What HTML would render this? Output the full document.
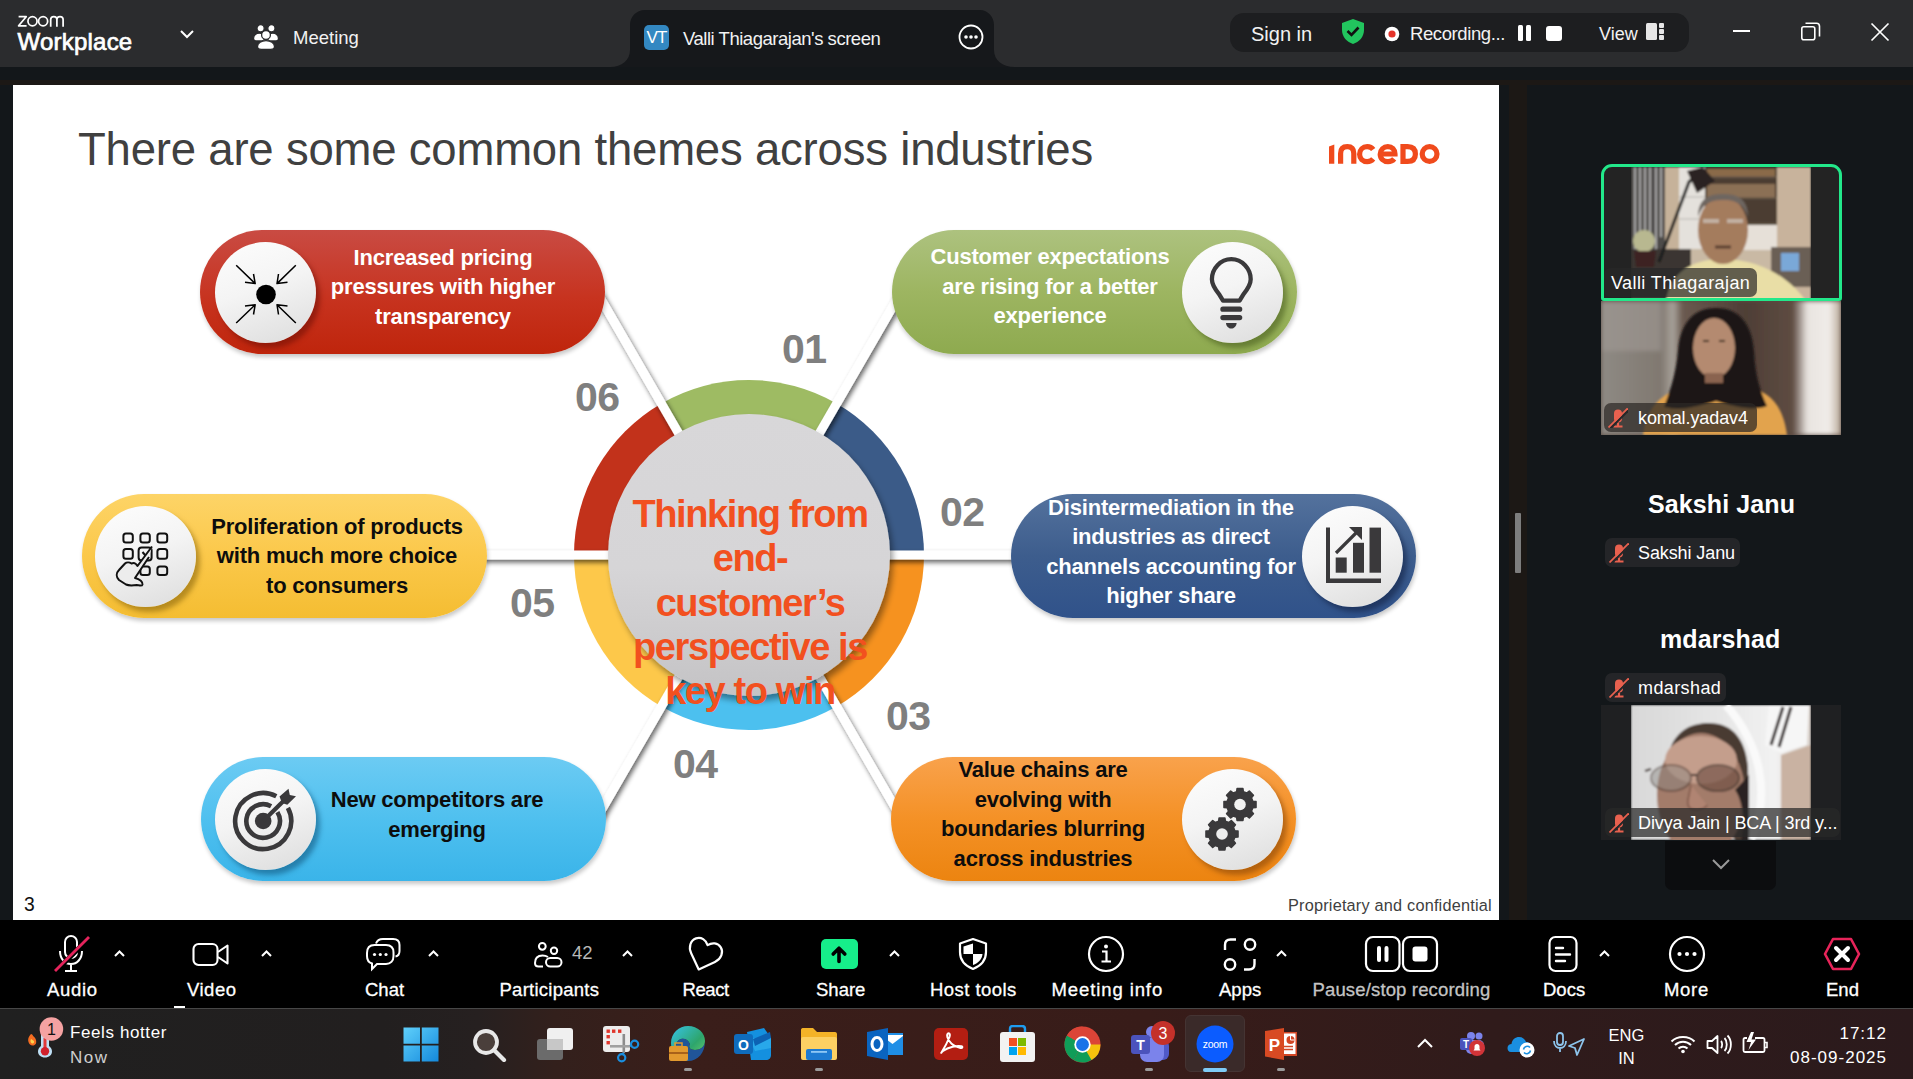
<!DOCTYPE html>
<html><head><meta charset="utf-8">
<style>
*{margin:0;padding:0;box-sizing:border-box}
html,body{width:1913px;height:1079px;overflow:hidden;background:#15181b;font-family:"Liberation Sans",sans-serif}
.a{position:absolute}
#top{left:0;top:0;width:1913px;height:67px;background:#2b2c2e}
#dark{left:0;top:67px;width:1913px;height:853px;background:#13171a}
#slide{left:13px;top:85px;width:1486px;height:835px;background:#fff;overflow:hidden}
#rp{left:1499px;top:67px;width:414px;height:853px;background:#13171a}
#tb{left:0;top:920px;width:1913px;height:88px;background:#000}
#task{left:0;top:1008px;width:1913px;height:71px;background:linear-gradient(90deg,#202020 0%,#221f1f 20%,#262020 25%,#33201c 29%,#3a1e1a 36%,#381c19 60%,#301b1b 78%,#2b1a1c 100%);border-top:1px solid #474747}
.w{color:#fff}
.lb{top:979px;font-size:18.5px;line-height:22px;color:#fff;white-space:nowrap;-webkit-text-stroke:0.3px currentColor}
.car{top:949px;width:13px;height:10px;fill:none;stroke:#fff;stroke-width:2}

.lbl{position:absolute;height:29px;border-radius:7px;background:rgba(38,39,41,.92)}
.lbl span{position:absolute;top:4px;color:#fff;font-size:18px;line-height:22px;white-space:nowrap;letter-spacing:-0.1px}
.mic{position:absolute;left:4px;top:5px;width:20px;height:20px}

.pill{position:absolute;width:405px;height:124px;border-radius:62px;box-shadow:1px 3px 4px rgba(0,0,0,.22)}
.circ{position:absolute;top:12px;width:101px;height:101px;border-radius:50%;background:linear-gradient(160deg,#fdfdfd 0%,#f4f4f4 45%,#dcdcdc 100%)}
.circ svg{position:absolute;left:0;top:0}
.ptxt{position:absolute;width:300px;text-align:center;font-weight:bold;font-size:22px;line-height:29.5px;letter-spacing:-0.2px;white-space:nowrap}
.k{color:#0d0d0d}
.num{font-weight:bold;font-size:41px;line-height:44px;color:#7f7f7f;letter-spacing:-0.6px}
.ctext{left:600px;top:492px;width:300px;text-align:center;color:#f2501f;font-weight:bold;font-size:38px;line-height:44.3px;letter-spacing:-1.4px;white-space:nowrap}
#title{left:78px;top:125px;font-size:45.5px;line-height:50px;color:#404040;letter-spacing:-0.2px;white-space:nowrap}

</style></head><body>
<div id="top" class="a"></div>
<svg class="a" style="left:0;top:0" width="70" height="30" viewBox="0 0 70 30" fill="none" stroke="#fff" stroke-width="1.75"><path d="M18.6 16.7H26.2L18.6 25.8H26.6" stroke-linejoin="round"/><circle cx="32.5" cy="21.25" r="4.55"/><circle cx="43.1" cy="21.25" r="4.55"/><path d="M50.7 26.8V19.6C50.7 17.4 52.1 16.5 53.8 16.5C55.6 16.5 56.9 17.4 56.9 19.6V26.8M56.9 19.6C56.9 17.4 58.3 16.5 60 16.5C61.8 16.5 63.1 17.4 63.1 19.6V26.8"/></svg>
<div class="a w" style="left:17.5px;top:27.8px;font-size:24px;font-weight:normal;-webkit-text-stroke:0.7px #fff;letter-spacing:0.22px;line-height:28px">Workplace</div>
<svg class="a" style="left:178px;top:28px" width="18" height="14" viewBox="0 0 18 14"><path d="M3 3L9 9L15 3" stroke="#fff" stroke-width="2" fill="none"/></svg>
<svg class="a" style="left:252px;top:23px" width="28" height="28" viewBox="0 0 28 28" fill="#fff" stroke="#2b2c2e" stroke-width="1.3"><circle cx="8.6" cy="5.3" r="3.6"/><circle cx="19.4" cy="5.3" r="3.6"/><path d="M1.5 15.5C1.5 12 4.5 10.2 7.2 10.2C9.8 10.2 12.3 12 12.3 15.5C12.3 17 11.3 18 9.7 18H4.2C2.6 18 1.5 17 1.5 15.5Z"/><path d="M15.7 15.5C15.7 12 18.2 10.2 20.8 10.2C23.5 10.2 26.5 12 26.5 15.5C26.5 17 25.4 18 23.8 18H18.3C16.7 18 15.7 17 15.7 15.5Z"/><circle cx="14" cy="11.9" r="4.4"/><path d="M5.5 23.5C5.5 20 9.5 17.6 14 17.6C18.5 17.6 22.5 20 22.5 23.5C22.5 25.5 21 26.4 18.8 26.4H9.2C7 26.4 5.5 25.5 5.5 23.5Z"/></svg>
<div class="a w" style="left:293px;top:27px;font-size:18.5px;line-height:22px;color:#f2f2f2">Meeting</div>
<svg class="a" style="left:610px;top:10px" width="405" height="57" viewBox="0 0 405 57"><path d="M0 57C12 57 20 50 20 40V15C20 7 26 0 35 0H370C378 0 384 7 384 15V40C384 50 392 57 405 57Z" fill="#16181b"/></svg>
<div class="a" style="left:644px;top:25px;width:25px;height:25px;border-radius:5px;background:#3388c2;color:#fff;font-size:17px;line-height:25px;text-align:center;letter-spacing:-0.8px">VT</div>
<div class="a w" style="left:683px;top:28px;font-size:18.5px;line-height:22px;letter-spacing:-0.47px;color:#f2f2f2">Valli Thiagarajan's screen</div>
<svg class="a" style="left:957px;top:23px" width="28" height="28" viewBox="0 0 28 28"><circle cx="14" cy="14" r="11.5" stroke="#fff" stroke-width="1.8" fill="none"/><circle cx="9" cy="14" r="1.8" fill="#fff"/><circle cx="14" cy="14" r="1.8" fill="#fff"/><circle cx="19" cy="14" r="1.8" fill="#fff"/></svg>
<div class="a" style="left:1230px;top:13px;width:459px;height:39px;border-radius:14px;background:#1d1e20"></div>
<div class="a w" style="left:1251px;top:22px;font-size:20px;line-height:24px;color:#f2f2f2">Sign in</div>
<svg class="a" style="left:1340px;top:18px" width="26" height="27" viewBox="0 0 26 27"><path d="M13 1L24 5V12C24 19 19 24 13 26C7 24 2 19 2 12V5Z" fill="#22c55e"/><path d="M7.5 13L11.5 17L18.5 9.5" stroke="#111" stroke-width="2.6" fill="none"/></svg>
<svg class="a" style="left:1384px;top:26px" width="16" height="16" viewBox="0 0 16 16"><circle cx="8" cy="8" r="7.3" fill="#fff"/><circle cx="8" cy="8" r="3.6" fill="#e5332a"/></svg>
<div class="a w" style="left:1410px;top:23px;font-size:18.5px;line-height:22px;letter-spacing:-0.4px;color:#f2f2f2">Recording...</div>
<div class="a" style="left:1518px;top:25px;width:5px;height:16px;background:#fff;border-radius:1.5px"></div>
<div class="a" style="left:1526px;top:25px;width:5px;height:16px;background:#fff;border-radius:1.5px"></div>
<div class="a" style="left:1546px;top:26px;width:16px;height:15px;background:#fff;border-radius:3px"></div>
<div class="a w" style="left:1599px;top:22.5px;font-size:18px;line-height:22px;color:#f2f2f2">View</div>
<svg class="a" style="left:1646px;top:23px" width="18" height="17" viewBox="0 0 18 17" fill="#e6e6e6"><rect x="0" y="0" width="11" height="17" rx="1.5"/><rect x="13" y="0" width="5" height="5" rx="1"/><rect x="13" y="6" width="5" height="5" rx="1"/><rect x="13" y="12" width="5" height="5" rx="1"/></svg>
<div class="a" style="left:1733px;top:30px;width:17px;height:1.6px;background:#fff"></div>
<svg class="a" style="left:1800px;top:21px" width="22" height="21" viewBox="0 0 22 21" fill="none" stroke="#fff" stroke-width="1.6"><rect x="1.8" y="5.8" width="13" height="13" rx="2"/><path d="M5.5 2.2H16.5C18.5 2.2 19.5 3.2 19.5 5.2V15.5"/></svg>
<svg class="a" style="left:1870px;top:22px" width="20" height="20" viewBox="0 0 20 20" stroke="#fff" stroke-width="1.7"><path d="M1.5 1.5L18.5 18.5M18.5 1.5L1.5 18.5"/></svg>

<div id="dark" class="a"></div>
<div id="rp" class="a"></div>
<div class="a" style="left:0;top:80px;width:1913px;height:5px;background:#1c1815"></div><div class="a" style="left:1509px;top:85px;width:18px;height:835px;background:#1c1815"></div>
<div class="a" style="left:1515px;top:513px;width:6px;height:60px;background:#7d7d7d;border-radius:1px"></div>
<!-- video 1 -->
<div class="a" style="left:1601px;top:164px;width:241px;height:137px;border-radius:11px 11px 2px 2px;overflow:hidden;background:#232323">
<svg class="a" style="left:30px;top:3px" width="180" height="134" viewBox="0 0 180 134">
<defs><filter id="bl1"><feGaussianBlur stdDeviation="1.2"/></filter></defs>
<g filter="url(#bl1)">
<rect width="180" height="134" fill="#c9b9a4"/>
<rect x="0" y="0" width="34" height="134" fill="#4e4c4a"/>
<path d="M4 0V90M9 0V95M14 0V80M19 0V92M25 0V85M30 0V70" stroke="#d8d8d8" stroke-width="1.6" opacity=".8"/>
<rect x="34" y="0" width="14" height="90" fill="#c6b29a"/>
<rect x="48" y="0" width="26" height="82" fill="#e4e1dc"/>
<path d="M48 30H74M48 52H74" stroke="#b8b4ae" stroke-width="1"/>
<rect x="74" y="0" width="72" height="58" fill="#4b3c33"/>
<rect x="76" y="2" width="68" height="8" fill="#8a6a48"/>
<rect x="76" y="17" width="68" height="14" fill="#8b6f55"/>
<path d="M74 10H146M74 31H146M74 57H146" stroke="#6a5a4c" stroke-width="1.4"/>
<rect x="74" y="58" width="72" height="25" fill="#e6e0d8"/>
<rect x="146" y="0" width="34" height="134" fill="#c8b39c"/>
<rect x="140" y="80" width="40" height="40" fill="#6a5e54"/>
<rect x="150" y="86" width="18" height="18" fill="#7aa8d8"/>
<rect x="0" y="82" width="60" height="52" fill="#3a3632"/>
<circle cx="13" cy="74" r="11" fill="#b8b890"/>
<path d="M3 84H25L23 100H5Z" fill="#3c2420"/>
<path d="M28 95L58 15L66 8" stroke="#1a1a1a" stroke-width="3" fill="none"/>
<path d="M56 4L72 0L84 14L66 26Z" fill="#2a2420"/>
<path d="M35 134C40 100 70 92 90 92C115 92 150 100 175 134Z" fill="#e9dea6"/>
<ellipse cx="92" cy="63" rx="25" ry="34" fill="#a47b5d"/>
<path d="M67 50C67 30 80 27 92 27C104 27 117 30 117 50C112 36 104 33 92 33C80 33 72 36 67 50Z" fill="#6e6660"/>
<path d="M72 54H88M96 54H112" stroke="#cfc8c0" stroke-width="4" opacity=".7"/>
<path d="M84 80H100" stroke="#5a4030" stroke-width="3"/>
</g>
</svg>
</div>
<div class="a" style="left:1601px;top:164px;width:241px;height:137px;border:3.2px solid #22e88a;border-radius:11px 11px 3px 3px"></div>
<div class="a lbl" style="left:1604px;top:268px;width:153px;background:rgba(40,40,40,.7)"><span style="left:7px;letter-spacing:0.4px">Valli Thiagarajan</span></div>
<!-- video 2 -->
<div class="a" style="left:1601px;top:301px;width:240px;height:134px;overflow:hidden;background:#5a4a42">
<svg class="a" style="left:0;top:0" width="240" height="134" viewBox="0 0 240 134">
<defs><filter id="bl2"><feGaussianBlur stdDeviation="2"/></filter><filter id="bl2b"><feGaussianBlur stdDeviation="0.9"/></filter><linearGradient id="v2bg" x1="0" y1="0" x2="1" y2="0"><stop offset="0" stop-color="#8e8a84"/><stop offset=".25" stop-color="#807870"/><stop offset=".3" stop-color="#a8a29a"/><stop offset=".34" stop-color="#6a5a50"/><stop offset=".6" stop-color="#4e3e36"/><stop offset=".8" stop-color="#5e4c42"/><stop offset=".86" stop-color="#e8e4e0"/><stop offset=".95" stop-color="#f0ece8"/><stop offset="1" stop-color="#b8a898"/></linearGradient></defs>
<g filter="url(#bl2)"><rect width="240" height="134" fill="url(#v2bg)"/><rect x="0" y="0" width="60" height="50" fill="#a09a94" opacity=".6"/></g>
<g filter="url(#bl2b)">
<path d="M42 134C46 104 62 92 82 87L150 87C170 92 182 105 186 134Z" fill="#e2a34e"/>
<path d="M115 7C90 7 79 25 77 50C75 75 67 95 63 106C80 111 100 105 115 100C130 105 150 111 166 105C160 92 154 75 153 50C151 25 140 7 115 7Z" fill="#1e1818"/>
<ellipse cx="113" cy="47" rx="21" ry="30" fill="#b48a70"/>
<path d="M104 72H122V82H104Z" fill="#8a6450"/>
<path d="M102 40H108M118 40H124" stroke="#3a2a22" stroke-width="2"/>
</g>
</svg>
</div>
<div class="a lbl" style="left:1604px;top:403px;width:153px;background:rgba(45,40,38,.72)"><svg class="mic" viewBox="0 0 20 20"><rect x="6" y="1.5" width="8" height="13" rx="4" fill="#e8614f"/><path d="M10 14.5V17.5M5.5 18.5H14.5" stroke="#e8614f" stroke-width="2.2"/><path d="M1.8 21L21 1.8" stroke="#262729" stroke-width="2.2"/><path d="M0.5 19.5L19.7 0.3" stroke="#e8614f" stroke-width="1.8"/></svg><span style="left:34px">komal.yadav4</span></div>
<div class="a w" style="left:1648px;top:490px;font-size:25px;font-weight:bold;line-height:28px;letter-spacing:0.1px">Sakshi Janu</div>
<div class="a lbl" style="left:1605px;top:538px;width:135px"><svg class="mic" viewBox="0 0 20 20"><rect x="6" y="1.5" width="8" height="13" rx="4" fill="#e8614f"/><path d="M10 14.5V17.5M5.5 18.5H14.5" stroke="#e8614f" stroke-width="2.2"/><path d="M1.8 21L21 1.8" stroke="#262729" stroke-width="2.2"/><path d="M0.5 19.5L19.7 0.3" stroke="#e8614f" stroke-width="1.8"/></svg><span style="left:33px">Sakshi Janu</span></div>
<div class="a w" style="left:1660px;top:624.5px;font-size:25px;font-weight:bold;line-height:28px;letter-spacing:0.1px">mdarshad</div>
<div class="a lbl" style="left:1605px;top:673px;width:121px"><svg class="mic" viewBox="0 0 20 20"><rect x="6" y="1.5" width="8" height="13" rx="4" fill="#e8614f"/><path d="M10 14.5V17.5M5.5 18.5H14.5" stroke="#e8614f" stroke-width="2.2"/><path d="M1.8 21L21 1.8" stroke="#262729" stroke-width="2.2"/><path d="M0.5 19.5L19.7 0.3" stroke="#e8614f" stroke-width="1.8"/></svg><span style="left:33px;letter-spacing:0.4px">mdarshad</span></div>
<!-- video 3 -->
<div class="a" style="left:1601px;top:705px;width:240px;height:135px;overflow:hidden;background:#1f2022">
<svg class="a" style="left:30px;top:0" width="180" height="135" viewBox="0 0 180 135">
<defs><filter id="bl3"><feGaussianBlur stdDeviation="1.2"/></filter><linearGradient id="v3bg" x1="0" y1="0" x2="1" y2="0"><stop offset="0" stop-color="#d8d8d8"/><stop offset=".5" stop-color="#e6e6e6"/><stop offset=".8" stop-color="#f2f2f2"/><stop offset="1" stop-color="#d8cfc8"/></linearGradient></defs>
<g filter="url(#bl3)">
<rect width="180" height="135" fill="url(#v3bg)"/>
<path d="M95 0C130 40 140 90 120 135" stroke="#fafafa" stroke-width="8" fill="none"/>
<path d="M150 50L180 40V135H150Z" fill="#c9b2a2"/>
<path d="M138 0H178L176 40L150 48L134 40Z" fill="#f6f6f6"/>
<path d="M152 2L140 40M160 2L148 42" stroke="#2a2020" stroke-width="3"/>
<path d="M36 60C38 28 58 18 78 18C100 18 114 32 117 62L118 135H104Z" fill="#4a3a32"/>
<ellipse cx="70" cy="90" rx="44" ry="62" fill="#a37c6a"/>
<ellipse cx="70" cy="55" rx="36" ry="24" fill="#c49e8c"/>
<ellipse cx="40" cy="73" rx="20" ry="13" fill="#8a8682" opacity=".45" stroke="#3a2c26" stroke-width="2.2"/>
<ellipse cx="87" cy="73" rx="21" ry="13" fill="#6a4a3e" opacity=".6" stroke="#3a2c26" stroke-width="2.2"/>
<path d="M14 66L20 64M60 70H66" stroke="#3a2c26" stroke-width="2"/>
<path d="M60 80C58 92 54 100 60 104C66 106 74 104 76 100" fill="#b08472" stroke="#7a5446" stroke-width="1.4"/>
<path d="M104 85C112 95 114 120 110 135H118V70Z" fill="#2a2420"/>
</g>
</svg>
</div>
<div class="a lbl" style="left:1605px;top:808px;width:235px;background:rgba(40,40,40,.72)"><svg class="mic" viewBox="0 0 20 20"><rect x="6" y="1.5" width="8" height="13" rx="4" fill="#e8614f"/><path d="M10 14.5V17.5M5.5 18.5H14.5" stroke="#e8614f" stroke-width="2.2"/><path d="M1.8 21L21 1.8" stroke="#262729" stroke-width="2.2"/><path d="M0.5 19.5L19.7 0.3" stroke="#e8614f" stroke-width="1.8"/></svg><span style="left:33px">Divya Jain | BCA | 3rd y...</span></div>
<div class="a" style="left:1665px;top:841px;width:111px;height:49px;background:#0c0d0f;border-radius:0 0 7px 7px"></div>
<svg class="a" style="left:1710px;top:857px" width="22" height="14" viewBox="0 0 22 14"><path d="M3 3L11 11L19 3" stroke="#9a9a9a" stroke-width="2" fill="none"/></svg>

<div id="slide" class="a"></div>
<svg class="a" style="left:1329px;top:144px" width="112" height="21" viewBox="0 0 112 21" fill="none" stroke="#f04a1c" stroke-width="5.2"><path d="M0 2.4L5.3 0.6V19.8H0Z" fill="#f04a1c" stroke="none"/><path d="M11.6 19.8V9.5C11.6 4.8 14 2.6 18.3 2.6C22.6 2.6 24.8 4.8 24.8 9.5V19.8"/><path d="M44.2 5.6C42.8 3.6 40.8 2.6 38.2 2.6C33.8 2.6 30.6 5.8 30.6 10.2C30.6 14.6 33.8 17.6 38.2 17.6C40.8 17.6 42.8 16.6 44.2 14.8"/><path d="M52.5 10H66C66 5.6 63 2.6 58.8 2.6C54.6 2.6 51.2 5.8 51.2 10.2C51.2 14.6 54.6 17.6 59 17.6C61.8 17.6 63.8 16.6 65.2 14.8"/><path d="M74 2.6V17.4H78.6C84 17.4 86.4 14.6 86.4 10C86.4 5.4 84 2.6 78.6 2.6Z"/><circle cx="100.6" cy="10" r="7.4"/></svg>
<div class="a" style="left:24px;top:894.5px;font-size:19.3px;line-height:20px;color:#111">3</div>
<div class="a" style="left:1288px;top:895.5px;font-size:16.3px;line-height:19px;letter-spacing:0.2px;color:#404040">Proprietary and confidential</div>

<div id="title" class="a">There are some common themes across industries</div>
<svg class="a" style="left:0;top:0" width="1913" height="1079" viewBox="0 0 1913 1079">
<defs>
<filter id="lsh" x="-20%" y="-20%" width="140%" height="140%"><feGaussianBlur in="SourceAlpha" stdDeviation="2.4"/><feOffset dx="1.5" dy="3"/><feComponentTransfer><feFuncA type="linear" slope="0.6"/></feComponentTransfer><feMerge><feMergeNode/><feMergeNode in="SourceGraphic"/></feMerge></filter>
<filter id="csh" x="-20%" y="-20%" width="140%" height="140%"><feGaussianBlur in="SourceAlpha" stdDeviation="3"/><feOffset dx="3" dy="5"/><feComponentTransfer><feFuncA type="linear" slope="0.4"/></feComponentTransfer><feMerge><feMergeNode/><feMergeNode in="SourceGraphic"/></feMerge></filter>
<linearGradient id="gc" x1="0" y1="0" x2="0" y2="1"><stop offset="0" stop-color="#d8d7d9"/><stop offset="0.55" stop-color="#d6d5d7"/><stop offset="1" stop-color="#c4c3c5"/></linearGradient>
</defs>
<path d="M749,555 L924.0,555.0 A175,175 0 0 0 836.5,403.4 Z" fill="#3b5b88"/>
<path d="M749,555 L836.5,403.4 A175,175 0 0 0 661.5,403.4 Z" fill="#9ebb63"/>
<path d="M749,555 L661.5,403.4 A175,175 0 0 0 574.0,555.0 Z" fill="#c2321b"/>
<path d="M749,555 L574.0,555.0 A175,175 0 0 0 661.5,706.6 Z" fill="#fdc84a"/>
<path d="M749,555 L661.5,706.6 A175,175 0 0 0 836.5,706.6 Z" fill="#4cc0ef"/>
<path d="M749,555 L836.5,706.6 A175,175 0 0 0 924.0,555.0 Z" fill="#f6921f"/>
<g filter="url(#lsh)" stroke="#fff" stroke-width="9">
<line x1="749" y1="555" x2="900" y2="294"/>
<line x1="749" y1="555" x2="1030" y2="555"/>
<line x1="749" y1="555" x2="900" y2="816"/>
<line x1="749" y1="555" x2="598" y2="816"/>
<line x1="749" y1="555" x2="470" y2="555"/>
<line x1="749" y1="555" x2="598" y2="294"/>
</g>
<circle cx="749" cy="555" r="141" fill="url(#gc)" filter="url(#csh)"/>
</svg>
<div class="a num" style="left:782px;top:327px">01</div>
<div class="a num" style="left:940px;top:490px">02</div>
<div class="a num" style="left:886px;top:694px">03</div>
<div class="a num" style="left:673px;top:742px">04</div>
<div class="a num" style="left:510px;top:581px">05</div>
<div class="a num" style="left:575px;top:375px">06</div>
<div class="a ctext">Thinking from<br>end-<br>customer’s<br>perspective is<br>key to win</div>

<div class="a pill" style="left:200px;top:230px;background:linear-gradient(#c94b43,#c7331f 55%,#bf250c)"><div class="circ" style="left:15px;box-shadow:4px 5px 5px rgba(110,15,5,.55)"><svg width="101" height="101" viewBox="0 0 101 101" stroke="#000" stroke-width="1.5" fill="none" stroke-linejoin="round"><circle cx="51" cy="52.5" r="9.8" fill="#000" stroke="none"/><path d="M21.2 23.2L40.2 41.6M38.5 32L40.2 41.6L30 40.3M80.8 23.2L62 41.6M63.5 32L62 41.6L72.5 40.3M21.2 81L40.2 62.7M30 64L40.2 62.7L38.5 72.5M80.8 81L62 62.7M72.5 64L62 62.7L63.5 72.5"/></svg></div>
<div class="ptxt w" style="left:93px;top:12.7px">Increased pricing<br>pressures with higher<br>transparency</div></div>

<div class="a pill" style="left:892px;top:230px;background:linear-gradient(#adc27f,#9db561 50%,#8eaa4f)"><div class="circ" style="left:290px;box-shadow:4px 5px 5px rgba(70,90,30,.55)"><svg width="101" height="101" viewBox="0 0 101 101" fill="none" stroke="#3a393b"><path d="M41 58.6L37.2 52.3C31.5 45.5 29.9 41.5 29.9 37.3C29.9 26.5 38.5 17.1 49.3 17.1C60.1 17.1 68.7 26.5 68.7 37.3C68.7 41.5 67.1 45.5 61.4 52.3L57.6 58.6Z" stroke-width="4.3" stroke-linejoin="round"/><path d="M40.9 67.2H57.7M40.9 75.6H57.7" stroke-width="5.2" stroke-linecap="round"/><path d="M44 81H54.6C54.6 84 52 86.6 49.3 86.6C46.6 86.6 44 84 44 81Z" fill="#3a393b" stroke="none"/></svg></div>
<div class="ptxt w" style="left:8px;top:12.1px">Customer expectations<br>are rising for a better<br>experience</div></div>

<div class="a pill" style="left:82px;top:494px;background:linear-gradient(#fdd467,#fbc84a 50%,#f4bd32)"><div class="circ" style="left:13px;box-shadow:4px 5px 5px rgba(130,95,10,.55)"><svg width="101" height="101" viewBox="0 0 101 101" fill="none" stroke="#111" stroke-width="2"><rect x="28.4" y="27.4" width="9.4" height="9" rx="2.5"/><rect x="45.4" y="27.4" width="9.4" height="9" rx="2.5"/><rect x="62.4" y="27.4" width="9.8" height="9" rx="2.5"/><rect x="28.4" y="43" width="9.4" height="9.8" rx="2.5"/><rect x="43.6" y="41.6" width="13" height="12.8" rx="3"/><rect x="62.4" y="43" width="9.8" height="9.8" rx="2.5"/><rect x="45.4" y="60.4" width="9.4" height="8.6" rx="2.5"/><rect x="62.4" y="60.4" width="9.8" height="8.6" rx="2.5"/><path d="M47.5 46L52.5 52"/><path d="M57 40.5L42.5 60C41 57.5 38.5 56.5 36.5 57.5C34.5 56 31.5 56 30 57.5L24 64C21 67 21 71 24 74L31 78.5C34 80 38 79.5 42 79C45 79.5 47 80.5 47.5 78.5C48 76 45 73 40 72L54 51" fill="#ececec" stroke-linejoin="round"/></svg></div>
<div class="ptxt k" style="left:105px;top:17.8px">Proliferation of products<br>with much more choice<br>to consumers</div></div>

<div class="a pill" style="left:1011px;top:494px;background:linear-gradient(#54729d,#3d5d8d 50%,#30528a)"><div class="circ" style="left:291px;box-shadow:4px 5px 5px rgba(20,35,70,.6)"><svg width="101" height="101" viewBox="0 0 101 101" fill="#3a393b"><path d="M24 21.5H28V72.5H79V77H24Z"/><rect x="33.7" y="51.5" width="11" height="15.2"/><rect x="51" y="36.8" width="11" height="29.9"/><rect x="67.5" y="21.6" width="11.5" height="45.1"/><path d="M34 47L55 26" stroke="#3a393b" stroke-width="3.2"/><path d="M47 21H60V34Z"/></svg></div>
<div class="ptxt w" style="left:10px;top:-1.1px">Disintermediation in the<br>industries as direct<br>channels accounting for<br>higher share</div></div>

<div class="a pill" style="left:201px;top:757px;background:linear-gradient(#6ccbf3,#4fc0ef 50%,#3ab4e9)"><div class="circ" style="left:14px;box-shadow:4px 5px 5px rgba(20,90,130,.6)"><svg width="101" height="101" viewBox="0 0 101 101" fill="none" stroke="#3a393b" stroke-width="4.6"><path d="M61.3 27.3A28 28 0 1 0 72.9 38.9"/><path d="M56.1 37.2A16.8 16.8 0 1 0 62.4 43.1"/><circle cx="48.2" cy="52" r="8.3" fill="#3a393b" stroke="none"/><path d="M48.2 52L69 31.5" stroke-width="4.2"/><path d="M64.5 27.5L73.5 19.8L74.8 26L81 27.3L72.3 35.8L67 34Z" fill="#3a393b" stroke="none"/></svg></div>
<div class="ptxt k" style="left:86px;top:28.1px">New competitors are<br>emerging</div></div>

<div class="a pill" style="left:891px;top:757px;background:linear-gradient(#f9a24c,#f49126 50%,#ec8410)"><div class="circ" style="left:291px;box-shadow:4px 5px 5px rgba(130,65,10,.55)"><svg width="101" height="101" viewBox="0 0 101 101"><g fill="#3a393b" stroke="#3a393b" stroke-width="1.6" stroke-linejoin="round"><path d="M70.8,32.2 L74.0,32.6 L74.0,38.4 L70.8,38.8 L69.4,42.2 L71.4,44.8 L67.3,48.9 L64.7,46.9 L61.3,48.3 L60.9,51.5 L55.1,51.5 L54.7,48.3 L51.3,46.9 L48.7,48.9 L44.6,44.8 L46.6,42.2 L45.2,38.8 L42.0,38.4 L42.0,32.6 L45.2,32.2 L46.6,28.8 L44.6,26.2 L48.7,22.1 L51.3,24.1 L54.7,22.7 L55.1,19.5 L60.9,19.5 L61.3,22.7 L64.7,24.1 L67.3,22.1 L71.4,26.2 L69.4,28.8Z"/><path d="M52.8,61.7 L56.0,62.1 L56.0,67.9 L52.8,68.3 L51.4,71.7 L53.4,74.3 L49.3,78.4 L46.7,76.4 L43.3,77.8 L42.9,81.0 L37.1,81.0 L36.7,77.8 L33.3,76.4 L30.7,78.4 L26.6,74.3 L28.6,71.7 L27.2,68.3 L24.0,67.9 L24.0,62.1 L27.2,61.7 L28.6,58.3 L26.6,55.7 L30.7,51.6 L33.3,53.6 L36.7,52.2 L37.1,49.0 L42.9,49.0 L43.3,52.2 L46.7,53.6 L49.3,51.6 L53.4,55.7 L51.4,58.3Z"/></g><circle cx="58" cy="35.5" r="5.8" fill="#f2f2f2"/><circle cx="40" cy="65" r="5.8" fill="#ededed"/></svg></div>
<div class="ptxt k" style="left:2px;top:-1.9px">Value chains are<br>evolving with<br>boundaries blurring<br>across industries</div></div>

<div id="tb" class="a"></div>
<svg class="a" style="left:50px;top:934px" width="44" height="40" viewBox="0 0 44 40" fill="none" stroke="#fff" stroke-width="2"><rect x="15" y="2" width="12" height="22" rx="6"/><path d="M10 17C10 25 15 30 21 30C27 30 32 25 32 17M21 30V36M15 37H27"/><path d="M6 37L39 4" stroke="#000" stroke-width="5"/><path d="M5 37L39 3" stroke="#e5245c" stroke-width="2.8"/></svg>
<div class="a lb" style="left:47px;letter-spacing:0.7px">Audio</div>
<svg class="a car" style="left:113px"><path d="M2 7L6.5 2.5L11 7"/></svg>
<svg class="a" style="left:192px;top:942px" width="38" height="26" viewBox="0 0 38 26" fill="none" stroke="#fff" stroke-width="2.1" stroke-linejoin="round"><rect x="1.5" y="2" width="24" height="21" rx="5"/><path d="M26 10L35.5 3.5V21.5L26 15"/></svg>
<div class="a lb" style="left:187px;letter-spacing:0.5px">Video</div>
<div class="a" style="left:174px;top:1006px;width:11px;height:2px;background:#fff"></div>
<svg class="a car" style="left:260px"><path d="M2 7L6.5 2.5L11 7"/></svg>
<svg class="a" style="left:364px;top:936px" width="38" height="36" viewBox="0 0 38 36" fill="none" stroke="#fff" stroke-width="2"><path d="M12 7.5C13 4.5 15 3 19 3H29C33 3 35.5 5 35.5 9V15C35.5 18 34 20 31.5 20.5"/><path d="M3 17C3 11 6 9 10.5 9H22C26.5 9 29.5 11 29.5 16.5V20C29.5 25 26.5 28 22 28H13L8 33V27.5C4.5 26.5 3 24 3 20Z" fill="#000"/><circle cx="10.5" cy="18.5" r="1.6" fill="#fff" stroke="none"/><circle cx="16.3" cy="18.5" r="1.6" fill="#fff" stroke="none"/><circle cx="22" cy="18.5" r="1.6" fill="#fff" stroke="none"/></svg>
<div class="a lb" style="left:365px">Chat</div>
<svg class="a car" style="left:427px"><path d="M2 7L6.5 2.5L11 7"/></svg>
<svg class="a" style="left:533px;top:941px" width="30" height="27" viewBox="0 0 30 27" fill="none" stroke="#fff" stroke-width="2"><circle cx="9.3" cy="5.3" r="3.4"/><circle cx="21" cy="9.8" r="3.2"/><path d="M10 25.5H5.5C3.5 25.5 2 24.5 2 22C2 17 5 14.5 9.5 14.5C11.5 14.5 13.5 15 15 16"/><rect x="13" y="17" width="15.5" height="8.5" rx="4.25"/></svg>
<div class="a" style="left:572px;top:942px;font-size:18.5px;line-height:22px;color:#b8b8b8">42</div>
<div class="a lb" style="left:499.5px;letter-spacing:0.25px">Participants</div>
<svg class="a car" style="left:621px"><path d="M2 7L6.5 2.5L11 7"/></svg>
<svg class="a" style="left:682px;top:935px" width="44" height="42" viewBox="0 0 44 42" fill="none" stroke="#fff" stroke-width="2" stroke-linejoin="round"><path transform="rotate(20 22 20) translate(22 20) scale(1.1) translate(-22 -20)" d="M22 34L10.5 22.5C6 18 6 11.5 10 8.3C14 5.2 19 6.5 22 10.5C25 6.5 30 5.2 34 8.3C38 11.5 38 18 33.5 22.5Z"/></svg>
<div class="a lb" style="left:682.5px;letter-spacing:-0.4px">React</div>
<div class="a" style="left:820.5px;top:939px;width:37px;height:30px;border-radius:5px;background:#16ee8a"></div>
<svg class="a" style="left:826px;top:943px" width="25" height="22" viewBox="0 0 25 22" fill="none" stroke="#000" stroke-width="3.6" stroke-linecap="round" stroke-linejoin="round"><path d="M13 18.5V5.5M7.2 11L13 5.2L18.8 11"/></svg>
<div class="a lb" style="left:816px">Share</div>
<svg class="a car" style="left:888px"><path d="M2 7L6.5 2.5L11 7"/></svg>
<svg class="a" style="left:957px;top:937px" width="32" height="34" viewBox="0 0 32 34" fill="none" stroke="#fff" stroke-width="2.2" stroke-linejoin="round"><path d="M16 2L29 6.5V15C29 23 23.5 29 16 32C8.5 29 3 23 3 15V6.5Z"/><path d="M16 6.5V17H25.5C25 22.5 21.5 26 16 28V17H6.5V9.5Z" fill="#fff" stroke="none"/></svg>
<div class="a lb" style="left:930px;letter-spacing:0.45px">Host tools</div>
<svg class="a" style="left:1087px;top:935px" width="38" height="38" viewBox="0 0 38 38" fill="none" stroke="#fff" stroke-width="2.2"><circle cx="19" cy="19" r="17"/><circle cx="19" cy="11.5" r="2" fill="#fff" stroke="none"/><path d="M15 16.5H19.5V26M14.5 26.5H24"/></svg>
<div class="a lb" style="left:1051.5px;letter-spacing:0.9px">Meeting info</div>
<svg class="a" style="left:1222px;top:937px" width="36" height="35" viewBox="0 0 36 35" fill="none" stroke="#fff" stroke-width="2.4"><path d="M3 13V8C3 4.5 5 2.5 8.5 2.5H14M22 32.5H27C30.5 32.5 32.5 30.5 32.5 27V22"/><circle cx="28" cy="7.5" r="5.2"/><circle cx="8" cy="27.5" r="5.2"/></svg>
<div class="a lb" style="left:1219px">Apps</div>
<svg class="a car" style="left:1275px"><path d="M2 7L6.5 2.5L11 7"/></svg>
<svg class="a" style="left:1364px;top:935px" width="75" height="38" viewBox="0 0 75 38" fill="none" stroke="#fff" stroke-width="2.2"><rect x="2" y="2" width="33.5" height="34" rx="7"/><rect x="39" y="2" width="34" height="34" rx="7"/><path d="M15 13V25M22.5 13V25" stroke-width="4" stroke-linecap="round"/><rect x="48.5" y="11.5" width="15" height="15" rx="3" fill="#fff" stroke="none"/></svg>
<div class="a lb" style="left:1312.5px;color:#c4c4c4;letter-spacing:0.15px">Pause/stop recording</div>
<svg class="a" style="left:1547px;top:935px" width="32" height="38" viewBox="0 0 32 38" fill="none" stroke="#fff" stroke-width="2.2"><rect x="2.5" y="2" width="27" height="34" rx="6"/><path d="M9 13H16M9 19.5H23M9 26H18" stroke-width="2.4" stroke-linecap="round"/></svg>
<div class="a lb" style="left:1543px">Docs</div>
<svg class="a car" style="left:1598px"><path d="M2 7L6.5 2.5L11 7"/></svg>
<svg class="a" style="left:1668px;top:935px" width="38" height="38" viewBox="0 0 38 38" fill="none" stroke="#fff" stroke-width="2.2"><circle cx="19" cy="19" r="17"/><circle cx="11.5" cy="19" r="2.1" fill="#fff" stroke="none"/><circle cx="19" cy="19" r="2.1" fill="#fff" stroke="none"/><circle cx="26.5" cy="19" r="2.1" fill="#fff" stroke="none"/></svg>
<div class="a lb" style="left:1664px;letter-spacing:0.7px">More</div>
<svg class="a" style="left:1823px;top:937px" width="38" height="34" viewBox="0 0 38 34"><path d="M10 2H28L36 17L28 32H10L2 17Z" fill="none" stroke="#e8245a" stroke-width="2.6" stroke-linejoin="round"/><path d="M13 11L25 23M25 11L13 23" stroke="#fff" stroke-width="4" stroke-linecap="round"/></svg>
<div class="a lb" style="left:1826px">End</div>

<div id="task" class="a"></div>
<svg class="a" style="left:22px;top:1016px" width="46" height="48" viewBox="0 0 46 48"><path d="M9 18C6 21 5 25 8 28.5C10 30.5 13 29.5 14 27.5C15 24.5 13 21 11 20C11 19 10 18 9 18Z" fill="#f36c21"/><path d="M9 23C8 25 8.5 27 10 27.5C11.5 28 12.5 26.5 12 25Z" fill="#fcd34d"/><path d="M19 17C19 14.5 21 13 23 13C25 13 27 14.5 27 17V30C29 31.5 30 33.5 30 35.5C30 39 27 41.5 23 41.5C19 41.5 16 39 16 35.5C16 33.5 17 31.5 19 30Z" fill="#bfe0f5"/><rect x="21.5" y="22" width="3" height="12" fill="#e0393a"/><circle cx="23" cy="35.3" r="4.2" fill="#d0212d"/><circle cx="29.4" cy="13" r="11.8" fill="#f5a2a2"/><text x="29.4" y="19" font-family="Liberation Sans" font-size="16" text-anchor="middle" fill="#111">1</text></svg>
<div class="a" style="left:70px;top:1023px;font-size:17px;line-height:20px;letter-spacing:0.6px;color:#fff">Feels hotter</div>
<div class="a" style="left:70px;top:1047.5px;font-size:17px;line-height:20px;letter-spacing:1.5px;color:#cfcfcf">Now</div>
<svg class="a" style="left:403px;top:1027px" width="36" height="35" viewBox="0 0 36 35"><defs><linearGradient id="wg" x1="0" y1="0" x2="1" y2="1"><stop offset="0" stop-color="#5fd0fb"/><stop offset="1" stop-color="#1489dc"/></linearGradient></defs><path d="M0.5 0.5H17V16.8H0.5ZM18.8 0.5H35.5V16.8H18.8ZM0.5 18.5H17V34.5H0.5ZM18.8 18.5H35.5V34.5H18.8Z" fill="url(#wg)"/></svg>
<svg class="a" style="left:471px;top:1028px" width="37" height="34" viewBox="0 0 37 34" fill="none"><circle cx="15" cy="14" r="11" stroke="#e8e8e8" stroke-width="3.8" fill="#4a3f3b"/><path d="M23 22L33 32" stroke="#e8e8e8" stroke-width="4.2" stroke-linecap="round"/></svg>
<svg class="a" style="left:536px;top:1027px" width="38" height="34" viewBox="0 0 38 34"><rect x="1" y="12" width="26" height="21" rx="3" fill="#6b6b6b"/><rect x="11" y="1" width="26" height="22" rx="3" fill="#f0f0f0"/><rect x="11" y="12" width="16" height="11" fill="#c7c7c7"/></svg>
<svg class="a" style="left:602px;top:1026px" width="40" height="38" viewBox="0 0 40 38"><rect x="1" y="0" width="27" height="26" rx="3" fill="#ededed"/><g fill="#e0362c"><rect x="4.5" y="3.5" width="3.4" height="3.4"/><rect x="10" y="3.5" width="3.4" height="3.4"/><rect x="16" y="3.5" width="3.4" height="3.4"/><rect x="4.5" y="9" width="3.4" height="3.4"/><rect x="4.5" y="15" width="3.4" height="3.4"/></g><path d="M21.8 8V27" stroke="#8c8c8c" stroke-width="2.6"/><path d="M8 20.3H28" stroke="#a0a0a0" stroke-width="2.6"/><path d="M28 20L30 19M21.8 27L20.5 28.5" stroke="#1a8fe0" stroke-width="2"/><circle cx="32.6" cy="18.2" r="3.6" fill="none" stroke="#1a8fe0" stroke-width="2.2"/><circle cx="19.7" cy="31.8" r="3.6" fill="none" stroke="#1a8fe0" stroke-width="2.2"/></svg>
<svg class="a" style="left:668px;top:1025px" width="40" height="38" viewBox="0 0 40 38"><defs><linearGradient id="eg" x1="0" y1="0" x2="1" y2="1"><stop offset="0" stop-color="#36c3e8"/><stop offset=".6" stop-color="#2ea56c"/><stop offset="1" stop-color="#6fd26b"/></linearGradient></defs><path d="M3 18C3 8 11 1 20 1C30 1 37 8 37 16C37 22 32 25 27 25C22 25 20 22 22 19C19 12 10 12 8 20C7 27 13 34 22 35C12 38 3 31 3 18Z" fill="url(#eg)"/><path d="M8 20C10 12 19 12 22 19C20 22 22 25 27 25C32 25 37 22 37 16C37 28 30 36 20 36C12 36 6 30 8 20Z" fill="#1c5fb0" opacity=".85"/><rect x="1" y="21" width="19" height="15" rx="2" fill="#e29a2f"/><rect x="1" y="27" width="19" height="2" fill="#a8621a"/><rect x="7" y="18" width="7" height="3.5" fill="none" stroke="#e29a2f" stroke-width="1.5"/></svg>
<div class="a" style="left:684px;top:1068px;width:8px;height:3px;border-radius:2px;background:#9a9a9a"></div>
<svg class="a" style="left:733px;top:1027px" width="39" height="34" viewBox="0 0 39 34"><path d="M14 5L31 1L38 11V28C38 31 36 33 33 33H18Z" fill="#1490df"/><path d="M16 11L38 11V21L22 24Z" fill="#28a8ea"/><path d="M20 12L37 5L38 11L22 19Z" fill="#0c62b4"/><rect x="1" y="7" width="19" height="20" rx="3" fill="#0f6cbd"/><text x="10.5" y="23" font-family="Liberation Sans" font-weight="bold" font-size="14" text-anchor="middle" fill="#fff">O</text></svg>
<svg class="a" style="left:800px;top:1027px" width="38" height="34" viewBox="0 0 38 34"><path d="M1 3C1 1.5 2 1 3.5 1H13L17 5H35C36.5 5 37 6 37 7.5V31H1Z" fill="#f4b328"/><rect x="1" y="10" width="36" height="23" rx="2" fill="#fcd063"/><rect x="6" y="22" width="26" height="11" rx="2" fill="#1d7ad1"/><rect x="11" y="24" width="16" height="1.8" fill="#8ec7f5"/></svg>
<div class="a" style="left:815px;top:1068px;width:8px;height:3px;border-radius:2px;background:#9a9a9a"></div>
<svg class="a" style="left:866px;top:1027px" width="38" height="34" viewBox="0 0 38 34"><rect x="16" y="6" width="21" height="22" fill="#1f8ee6"/><path d="M16 9L26.5 17L37 9V8H16Z" fill="#fff"/><path d="M1 5L22 1V33L1 29Z" fill="#0a64c0"/><ellipse cx="11" cy="17" rx="5" ry="6.5" fill="none" stroke="#fff" stroke-width="3"/></svg>
<svg class="a" style="left:933px;top:1027px" width="36" height="34" viewBox="0 0 36 34"><rect x="1" y="1" width="34" height="32" rx="5" fill="#b31e12"/><path d="M8.5 25.5C11 21.5 14.5 15 16.5 10C17.2 8 16.8 6.2 15.6 6.2C14.4 6.2 13.8 8 14.4 10.2C15.6 14.5 20 19.5 27.5 21C29.5 21.4 30 19.6 28.3 19.2C24 18.3 15.5 20 10 24C8.3 25.2 8 26.5 8.5 25.5Z" fill="none" stroke="#fff" stroke-width="2" stroke-linejoin="round"/></svg>
<svg class="a" style="left:999px;top:1025px" width="37" height="38" viewBox="0 0 37 38"><path d="M11 8V4C11 2 12 1 14 1H23C25 1 26 2 26 4V8" fill="none" stroke="#1e9cf0" stroke-width="2.4"/><rect x="1" y="7" width="35" height="30" rx="3" fill="#f2f2f2"/><rect x="10" y="13" width="8" height="8" fill="#f25022"/><rect x="19" y="13" width="8" height="8" fill="#7fba00"/><rect x="10" y="22" width="8" height="8" fill="#00a4ef"/><rect x="19" y="22" width="8" height="8" fill="#ffb900"/></svg>
<svg class="a" style="left:1064px;top:1026px" width="37" height="37" viewBox="0 0 37 37"><circle cx="18.5" cy="18.5" r="18" fill="#db4437"/><path d="M18.5 18.5L34.1 27.5A18 18 0 0 1 9.5 34.1Z" fill="#0f9d58"/><path d="M18.5 18.5L9.5 34.1A18 18 0 0 1 2.9 9.5Z" fill="#0f9d58"/><path d="M18.5 18.5H36.5A18 18 0 0 1 27.5 34.1Z" fill="#f4c20d"/><path d="M18.5 18.5L2.9 9.5A18 18 0 0 1 18.5 0.5Z" fill="#db4437"/><circle cx="18.5" cy="18.5" r="8.2" fill="#fff"/><circle cx="18.5" cy="18.5" r="6.4" fill="#1a73e8"/></svg>
<svg class="a" style="left:1128px;top:1018px" width="50" height="46" viewBox="0 0 50 46"><circle cx="33" cy="15" r="5" fill="#7b83eb"/><rect x="25" y="22" width="16" height="20" rx="6" fill="#5059c9"/><circle cx="24" cy="14" r="6" fill="#7b83eb"/><rect x="12" y="20" width="24" height="24" rx="7" fill="#7b83eb"/><rect x="3" y="17" width="19" height="19" rx="3" fill="#4b53bc"/><text x="12.5" y="32" font-family="Liberation Sans" font-weight="bold" font-size="14" text-anchor="middle" fill="#fff">T</text><circle cx="35" cy="15" r="12" fill="#c4312a"/><text x="35" y="21" font-family="Liberation Sans" font-size="16" text-anchor="middle" fill="#fff">3</text></svg>
<div class="a" style="left:1145px;top:1068px;width:8px;height:3px;border-radius:2px;background:#9a9a9a"></div>
<div class="a" style="left:1185px;top:1015px;width:60px;height:57px;border-radius:6px;background:#3a2a29;border:1px solid #453433"></div>
<svg class="a" style="left:1196px;top:1025px" width="38" height="38" viewBox="0 0 38 38"><circle cx="19" cy="19" r="18.5" fill="#0b5cff"/><text x="19" y="23" font-family="Liberation Sans" font-size="10.5" text-anchor="middle" fill="#fff" letter-spacing="-0.3">zoom</text></svg>
<div class="a" style="left:1203px;top:1068px;width:24px;height:4px;border-radius:2px;background:#7ecbf5"></div>
<svg class="a" style="left:1262px;top:1026px" width="37" height="36" viewBox="0 0 37 36"><rect x="21" y="6" width="14" height="24" fill="#d24726"/><rect x="22" y="7.5" width="11.5" height="20.5" fill="#fff"/><circle cx="28.5" cy="14" r="4" fill="#d24726"/><path d="M28.5 10V14H32.5" stroke="#fff" stroke-width="1" fill="none"/><path d="M22 20.5H31M22 23.5H31" stroke="#d24726" stroke-width="1.4"/><path d="M3 5L22 2V34L3 30.5Z" fill="#d84a23"/><text x="12.5" y="24.5" font-family="Liberation Sans" font-weight="bold" font-size="17" text-anchor="middle" fill="#fff">P</text></svg>
<div class="a" style="left:1277px;top:1068px;width:8px;height:3px;border-radius:2px;background:#9a9a9a"></div>
<svg class="a" style="left:1416px;top:1037px" width="18" height="12" viewBox="0 0 18 12"><path d="M2 10L9 3L16 10" stroke="#fff" stroke-width="2" fill="none"/></svg>
<svg class="a" style="left:1459px;top:1031px" width="28" height="26" viewBox="0 0 28 26"><circle cx="20" cy="5" r="3.5" fill="#7b83eb"/><circle cx="12" cy="5" r="4" fill="#7b83eb"/><rect x="7" y="9" width="18" height="14" rx="5" fill="#7b83eb"/><rect x="1" y="7" width="12" height="12" rx="2" fill="#4b53bc"/><text x="7" y="17" font-family="Liberation Sans" font-weight="bold" font-size="10" text-anchor="middle" fill="#fff">T</text><circle cx="18" cy="17" r="8" fill="#d13438"/><path d="M14.5 19.5H21.5L20.5 18V15.5C20.5 14 19.5 13 18 13C16.5 13 15.5 14 15.5 15.5V18Z" fill="#fff"/></svg>
<svg class="a" style="left:1507px;top:1034px" width="30" height="24" viewBox="0 0 30 24"><path d="M4 18C1.5 18 0.5 16 0.5 14C0.5 11.5 2.5 10 4.5 10C5 5.5 8.5 3 12 3C15.5 3 18 5 19 8C22 8 24 10 24 13V18Z" fill="#1a8fe0"/><circle cx="20" cy="16" r="7.5" fill="#fff"/><path d="M16.5 15.5A3.8 3.8 0 0 1 23 13.5M23.5 16.5A3.8 3.8 0 0 1 17 18.5" fill="none" stroke="#1a8fe0" stroke-width="1.6"/></svg>
<svg class="a" style="left:1552px;top:1032px" width="34" height="25" viewBox="0 0 34 25" fill="none" stroke="#8dc4ec" stroke-width="1.8"><rect x="5" y="1" width="6" height="12" rx="3"/><path d="M2 9C2 14 5 16 8 16C11 16 14 14 14 9M8 16V20"/><path d="M32 7L17 14L23 16L25 23Z" stroke-linejoin="round"/></svg>
<div class="a" style="left:1608px;top:1024px;font-size:16.5px;line-height:23px;color:#fff;text-align:center;width:37px">ENG<br>IN</div>
<svg class="a" style="left:1670px;top:1034px" width="26" height="20" viewBox="0 0 26 20" fill="none" stroke="#fff" stroke-width="2"><path d="M1.5 7.5C7.5 1.5 18.5 1.5 24.5 7.5M5 11C9.5 6.5 16.5 6.5 21 11M8.5 14.5C11 12 15 12 17.5 14.5"/><circle cx="13" cy="17.5" r="1.8" fill="#fff" stroke="none"/></svg>
<svg class="a" style="left:1706px;top:1034px" width="26" height="21" viewBox="0 0 26 21" fill="none" stroke="#fff" stroke-width="1.8" stroke-linejoin="round"><path d="M1.5 7H6L11.5 2V19L6 14H1.5Z"/><path d="M15 7C16.5 8.5 16.5 12.5 15 14M18.5 4C21.5 7 21.5 14 18.5 17M21.5 1.5C26 6 26 15 21.5 19.5"/></svg>
<svg class="a" style="left:1742px;top:1031px" width="27" height="23" viewBox="0 0 27 23" fill="none" stroke="#fff" stroke-width="1.8"><path d="M5 7H3C2 7 1.5 7.5 1.5 8.5V19.5C1.5 20.5 2 21 3 21H21C22 21 22.5 20.5 22.5 19.5V8.5C22.5 7.5 22 7 21 7H13"/><path d="M23 11.5H25V16.5H23" stroke-width="1.6"/><path d="M9 1L4.5 11H9L6.5 19L14 8.5H9.5L12 1Z" fill="#fff" stroke="none"/></svg>
<div class="a" style="left:1771px;top:1021.5px;width:116px;text-align:right;font-size:17px;line-height:24px;letter-spacing:1px;color:#fff">17:12<br>08-09-2025</div>

</body></html>
